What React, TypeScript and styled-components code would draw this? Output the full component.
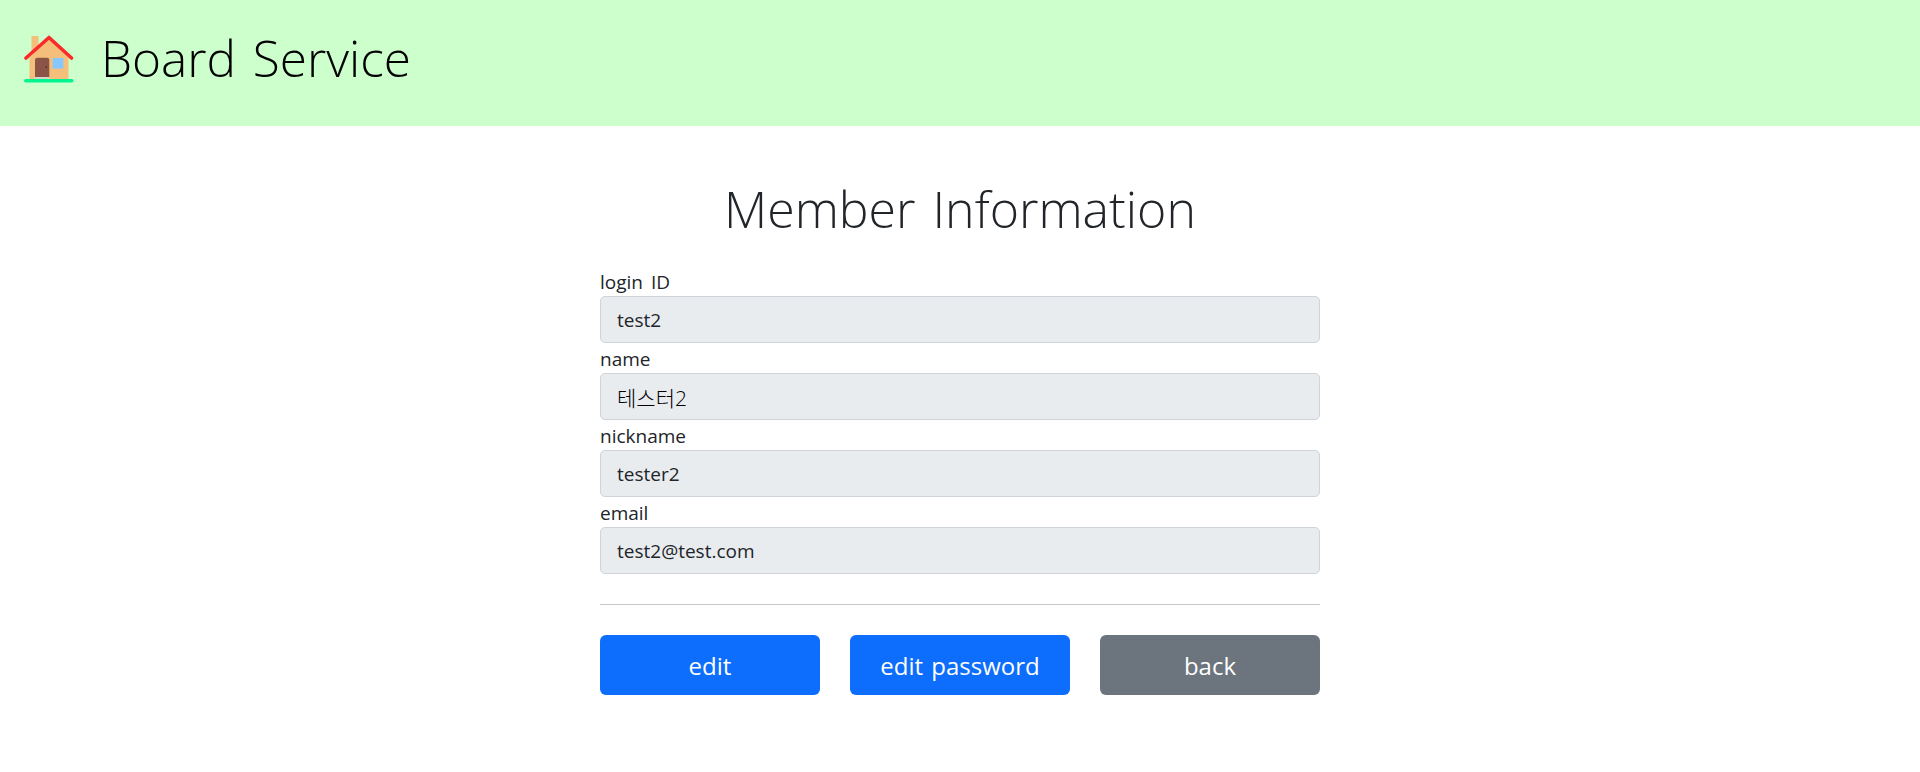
import React from "react";
import styled, { createGlobalStyle } from "styled-components";

const Global = createGlobalStyle`
  * { box-sizing: border-box; }
  html, body { margin: 0; padding: 0; background: #fff; }
  body {
    font-family: "Open Sans", "Noto Sans CJK KR", sans-serif;
    font-weight: 400;
    color: #212529;
  }
`;

const Header = styled.header`
  height: 126px;
  background: #ccffcc;
  display: flex;
  align-items: center;
  gap: 27px;
  padding: 0 0 9px 24px;
`;

const Logo = styled.svg`
  width: 50px;
  height: 48px;
  flex: none;
`;

const Brand = styled.h1`
  margin: 0;
  font-size: 49.5px;
  font-weight: 300;
  line-height: 1.2;
  word-spacing: 4px;
  color: #000;
`;

const Main = styled.main`
  width: 720px;
  margin: 0 auto;
  padding-top: 54px;
`;

const Title = styled.h2`
  margin: 0 0 28px;
  font-size: 50px;
  line-height: 58px;
  font-weight: 300;
  text-align: center;
  word-spacing: 4px;
  color: #212529;
`;

const Field = styled.div`
  display: flex;
  flex-direction: column;
`;

const Label = styled.label`
  height: 30px;
  font-size: 19px;
  line-height: 32px;
  word-spacing: 3px;
`;

const Input = styled.input<{ $wide?: boolean }>`
  height: 47px;
  width: 100%;
  padding: 0 16px;
  font: inherit;
  font-size: ${(p) => (p.$wide ? "21px" : "19px")};
  font-weight: ${(p) => (p.$wide ? 300 : 400)};
  color: ${(p) => (p.$wide ? "#000" : "#212529")};
  background: #e9ecef;
  border: 1px solid #ced4da;
  border-radius: 5px;
  outline: none;
  opacity: 1;
`;

const Rule = styled.hr`
  margin: 30px 0;
  border: 0;
  border-top: 1px solid #c8c9ca;
`;

const Buttons = styled.div`
  display: grid;
  grid-template-columns: repeat(3, 1fr);
  gap: 30px;
`;

const Button = styled.button<{ $tone: "primary" | "secondary" }>`
  height: 60px;
  font: inherit;
  font-size: 24px;
  word-spacing: 2px;
  color: #fff;
  background: ${(p) => (p.$tone === "primary" ? "#0d6efd" : "#6c757d")};
  border: 0;
  border-radius: 6px;
`;

const fields = [
  { label: "login ID", value: "test2" },
  { label: "name", value: "테스터2", wide: true },
  { label: "nickname", value: "tester2" },
  { label: "email", value: "test2@test.com" },
];

export default function App() {
  return (
    <>
      <Global />
      <Header>
        <Logo viewBox="0 0 50 48" aria-hidden="true">
          <rect x="7.5" y="1" width="7" height="16" fill="#f4bf7a" />
          <path d="M5.5 23 L25 3 L44.5 23 V44 H5.5 Z" fill="#f4bf7a" />
          <path d="M11 25 Q11 22.8 13.5 22.8 H23 Q25.3 22.8 25.3 25 V42 H11 Z" fill="#8a5546" />
          <rect x="10.5" y="42" width="15" height="2" fill="#d5d5c8" />
          <circle cx="22.3" cy="32" r="0.8" fill="#33201a" />
          <rect x="28.7" y="23" width="10.6" height="10.6" fill="#85c8ff" />
          <path d="M2 23 L25 2.5 L47.5 23" fill="none" stroke="#fb2a2a" strokeWidth="3.6" strokeLinecap="round" strokeLinejoin="round" />
          <rect x="0" y="44" width="49.5" height="3.5" rx="1.7" fill="#00f58f" />
        </Logo>
        <Brand>Board Service</Brand>
      </Header>
      <Main>
        <Title>Member Information</Title>
        {fields.map((f) => (
          <Field key={f.label}>
            <Label>{f.label}</Label>
            <Input value={f.value} $wide={f.wide} readOnly />
          </Field>
        ))}
        <Rule />
        <Buttons>
          <Button $tone="primary">edit</Button>
          <Button $tone="primary">edit password</Button>
          <Button $tone="secondary">back</Button>
        </Buttons>
      </Main>
    </>
  );
}
